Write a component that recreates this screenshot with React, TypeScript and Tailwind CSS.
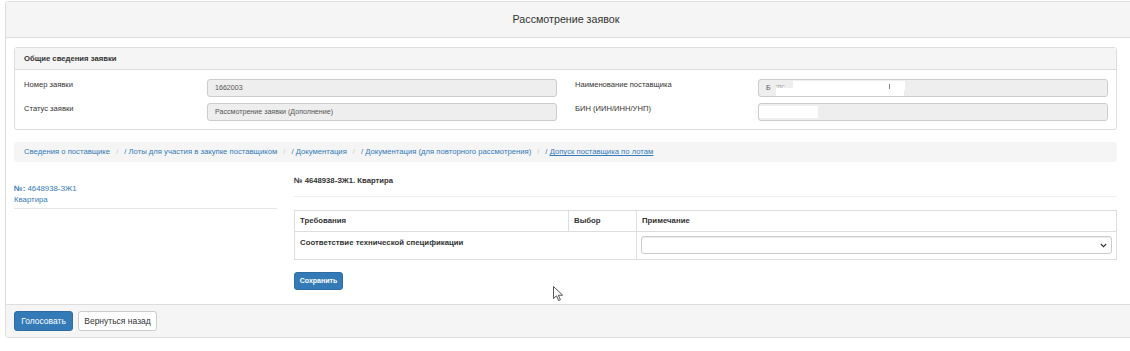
import React from "react";

const font = { fontFamily: '"Liberation Sans", Arial, sans-serif' };

function Field({ label, children }: { label: string; children: React.ReactNode }) {
  return (
    <div className="flex">
      <div className="w-[183px] text-[7.6px] text-[#333] leading-[11px] pt-[0px]">{label}</div>
      <div className="w-[350px] h-[18px] bg-[#eeeeee] border border-[#cccccc] rounded-[3px] text-[7.1px] text-[#555] flex items-center px-[7px] relative">
        {children}
      </div>
    </div>
  );
}

export default function App() {
  const crumbs = [
    "/ Лоты для участия в закупке поставщиком",
    "/ Документация",
    "/ Документация (для повторного рассмотрения)",
  ];
  return (
    <div className="w-[1130px] h-[351px] bg-white overflow-hidden pt-px pl-[5px] relative" style={font}>
      <div className="w-[1135px] border border-[#dddddd] rounded-[3px]">
        {/* header */}
        <div className="h-[36px] bg-[#f5f5f5] border-b border-[#dddddd] flex items-center justify-center pr-[13px]">
          <span className="text-[10.7px] text-[#333]">Рассмотрение заявок</span>
        </div>
        {/* body */}
        <div className="pl-[8px] pt-[9px] pb-[14px]">
          <div className="w-[1103px] border border-[#dddddd] rounded-[3px]">
            <div className="h-[22px] bg-[#f5f5f5] border-b border-[#dddddd] flex items-center px-[9px]">
              <span className="text-[7.7px] font-bold text-[#333]">Общие сведения заявки</span>
            </div>
            <div className="pl-[9px] pt-[9px] pb-[8px] flex flex-col gap-[6px]">
              <div className="flex gap-[18px]">
                <Field label="Номер заявки">1662003</Field>
                <Field label="Наименование поставщика">
                  <span>Б</span>
                  <span className="ml-[5px] text-[5px] text-[#999]">''ПС</span>
                  <div className="absolute left-[34px] top-[1px] w-[112px] h-[9px] bg-white" />
                  <div className="absolute left-[17px] top-[8px] w-[128px] h-[8px] bg-white" />
                  <div className="absolute left-[130px] top-[4px] w-[1px] h-[5px] bg-[#888]" />
                </Field>
              </div>
              <div className="flex gap-[18px]">
                <Field label="Статус заявки">Рассмотрение заявки (Дополнение)</Field>
                <Field label="БИН (ИИН/ИНН/УНП)">
                  <div className="absolute left-0 top-[2px] w-[59px] h-[12px] bg-white" />
                </Field>
              </div>
            </div>
          </div>

          {/* breadcrumb */}
          <div className="w-[1103px] h-[20px] mt-[12px] bg-[#f5f5f5] rounded-[3px] flex items-center px-[10px] text-[7.7px]">
            <span className="text-[#337ab7]">Сведения о поставщике</span>
            {crumbs.map((c) => (
              <React.Fragment key={c}>
                <span className="text-[#cccccc] px-[6px]">/</span>
                <span className="text-[#337ab7]">{c}</span>
              </React.Fragment>
            ))}
            <span className="text-[#cccccc] px-[6px]">/</span>
            <span className="text-[#337ab7]">/ <span className="underline">Допуск поставщика по лотам</span></span>
          </div>

          {/* content */}
          <div className="flex mt-[7px]">
            <div className="w-[263px] pt-[14px]">
              <div className="text-[7.8px] leading-[11px] text-[#337ab7] pb-[3px] border-b border-[#e5e5e5]">
                <div><span className="font-bold">№:</span> 4648938-ЗЖ1</div>
                <div>Квартира</div>
              </div>
            </div>
            <div className="ml-[17px] w-[823px]">
              <div className="text-[7.7px] font-bold text-[#333] pt-[6px] h-[28px] border-b border-[#eeeeee]">
                № 4648938-ЗЖ1. Квартира
              </div>
              <div className="mt-[13px] border border-[#dddddd] text-[7.8px] font-bold text-[#333]">
                <div className="flex h-[21px] border-b border-[#dddddd]">
                  <div className="w-[274px] border-r border-[#dddddd] flex items-center px-[5px]">Требования</div>
                  <div className="w-[68px] border-r border-[#dddddd] flex items-center px-[5px]">Выбор</div>
                  <div className="flex-1 flex items-center px-[5px]">Примечание</div>
                </div>
                <div className="flex h-[27px]">
                  <div className="w-[342px] border-r border-[#dddddd] px-[5px] pt-[5px]">Соответствие технической спецификации</div>
                  <div className="flex-1 px-[4px] pt-[4px]">
                    <div className="h-[18px] border border-[#cccccc] rounded-[3px] bg-white shadow-[inset_0_1px_1px_rgba(0,0,0,0.075)] flex items-center justify-end pr-[4px]">
                      <svg width="7" height="5" viewBox="0 0 7 5" fill="none">
                        <path d="M0.8 1 L3.5 3.7 L6.2 1" stroke="#333" strokeWidth="1.1" />
                      </svg>
                    </div>
                  </div>
                </div>
              </div>
              <button className="mt-[12px] w-[49px] h-[18px] bg-[#337ab7] border border-[#2e6da4] rounded-[3px] text-white text-[7px] font-bold flex items-center justify-center">
                Сохранить
              </button>
            </div>
          </div>
        </div>
        {/* footer */}
        <div className="h-[33px] bg-[#f5f5f5] border-t border-[#dddddd] flex items-center pl-[8px] gap-[5px]">
          <button className="w-[59px] h-[20px] bg-[#337ab7] border border-[#2e6da4] rounded-[3px] text-white text-[8.5px] flex items-center justify-center">
            Голосовать
          </button>
          <button className="w-[79px] h-[20px] bg-white border border-[#cccccc] rounded-[3px] text-[#333] text-[8.5px] flex items-center justify-center">
            Вернуться назад
          </button>
        </div>
      </div>

      {/* mouse cursor */}
      <svg className="absolute left-[553px] top-[286px]" width="11" height="16" viewBox="0 0 11 16">
        <path d="M0.5 0.5 L0.5 12.5 L3.5 9.8 L5.6 14.6 L7.4 13.8 L5.4 9.2 L9.6 9.2 Z" fill="white" stroke="#555" strokeWidth="1" strokeLinejoin="round" />
      </svg>
    </div>
  );
}
